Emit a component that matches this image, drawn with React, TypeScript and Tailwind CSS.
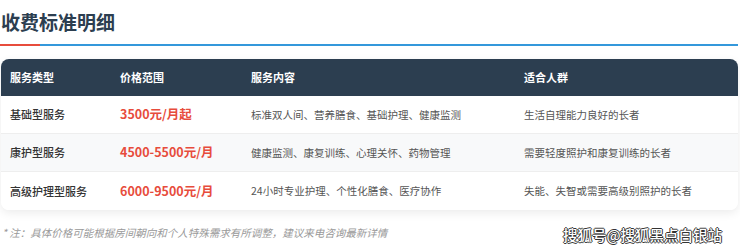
import React from 'react'

interface Row { type: string; price: string; content: string; target: string }

const rows: Row[] = [
  { type: '基础型服务', price: '3500元/月起', content: '标准双人间、营养膳食、基础护理、健康监测', target: '生活自理能力良好的长者' },
  { type: '康护型服务', price: '4500-5500元/月', content: '健康监测、康复训练、心理关怀、药物管理', target: '需要轻度照护和康复训练的长者' },
  { type: '高级护理型服务', price: '6000-9500元/月', content: '24小时专业护理、个性化膳食、医疗协作', target: '失能、失智或需要高级别照护的长者' },
]

const cols = 'grid grid-cols-[110px_131px_273px_1fr] items-center'

export default function App() {
  return (
    <div className="relative w-[740px] h-[250px] bg-white overflow-hidden" style={{ fontFamily: '"Noto Sans CJK SC", "Noto Sans", sans-serif' }}>
      <div className="pt-[9px] pl-[1px]">
        <h2 className="text-[19px] leading-[26px] font-bold text-[#2c3e50]">收费标准明细</h2>
      </div>
      <div className="mt-[9px] flex h-[2px] w-[738px]">
        <div className="w-[40px] bg-[#e74c3c]" />
        <div className="flex-1 bg-[#3498db]" />
      </div>

      <div className="mt-[13px] ml-[1px] w-[737px] rounded-lg bg-white shadow-[0_3px_10px_rgba(0,0,0,0.08)] overflow-hidden">
        <div className={`${cols} h-[37px] bg-[#2c3e50] text-white text-[11px] font-bold`}>
          <div className="pl-[9px]">服务类型</div>
          <div className="pl-[9px]">价格范围</div>
          <div className="pl-[9px]">服务内容</div>
          <div className="pl-[9px]">适合人群</div>
        </div>
        {rows.map((r, i) => (
          <div key={r.type} className={`${cols} h-[38px] ${i === 1 ? 'bg-[#f8f9fa]' : 'bg-white'} ${i < rows.length - 1 ? 'border-b border-[#eeeeee]' : ''}`}>
            <div className="pl-[9px] text-[11px] font-medium text-[#333]">{r.type}</div>
            <div className="pl-[9px] text-[12.5px] font-bold text-[#e74c3c]">{r.price}</div>
            <div className="pl-[9px] text-[10.5px] text-[#555]">{r.content}</div>
            <div className="pl-[9px] text-[10.5px] text-[#555]">{r.target}</div>
          </div>
        ))}
      </div>

      <p className="mt-[15px] pl-[2px] text-[10.5px] italic text-[#999]">* 注：具体价格可能根据房间朝向和个人特殊需求有所调整，建议来电咨询最新详情</p>

      <div className="absolute left-[563px] top-[225px] text-[14.5px] leading-[20px] font-medium text-white [text-shadow:1px_0_0_#333,-1px_0_0_#333,0_1px_0_#333,0_-1px_0_#333]">搜狐号@搜狐黑点白银站</div>
    </div>
  )
}
